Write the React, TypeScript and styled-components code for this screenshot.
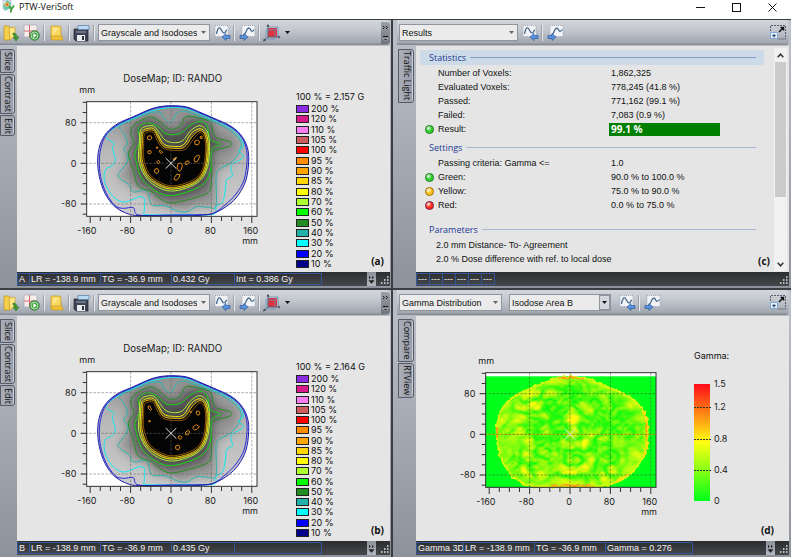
import React, { useId } from "react";
import styled, { createGlobalStyle } from "styled-components";

const uiFont = `"Liberation Sans", Arial, sans-serif`;
const headFont = `"Open Sans", "Noto Sans", sans-serif`;
const chartFont = `Inter, "DejaVu Sans", sans-serif`;

const GlobalStyle = createGlobalStyle`
  * { box-sizing: border-box; }
  body { margin: 0; background: #fff; font-family: ${uiFont}; font-size: 9px; color: #111; }
  button, select { font: inherit; color: inherit; }
`;

/* ---------- window ---------- */

const Window = styled.div`
  min-height: 100vh;
  display: flex;
  flex-direction: column;
`;

const TitleBar = styled.header`
  height: 19px;
  display: flex;
  align-items: flex-start;
  background: #fff;
  padding: 0 6px 0 2px;
`;

const AppTitle = styled.h1`
  flex: 1;
  margin: 0 0 0 4px;
  font: 400 9px/13px ${headFont};
`;

const WindowButton = styled.button`
  width: 36px;
  height: 13px;
  padding: 0;
  border: 0;
  background: none;
  display: flex;
  justify-content: center;
  align-items: center;
  &:last-child { width: 24px; margin-left: 6px; }
`;

const Workspace = styled.main`
  flex: 1;
  display: grid;
  grid-template-columns: minmax(0, 391fr) minmax(0, 398fr);
  grid-template-rows: minmax(268px, 268fr) minmax(267px, 267fr);
  gap: 2px;
  background: #3b3d41;
  padding-top: 1px;
`;

const Panel = styled.section<{ $side: "left" | "right" }>`
  display: flex;
  flex-direction: column;
  padding: ${(p) => (p.$side === "left" ? "0 1px 0 0" : "0 2px 0 4px")};
  background: linear-gradient(#bcc1ca, #8d929b);
`;

const Toolbar = styled.div`
  height: 25px;
  margin-bottom: 1px;
  display: flex;
  align-items: center;
  background: linear-gradient(#d3d6dc, #c3c7ce 40%, #a3a8b1 90%, #7d828b);
  border-radius: 0 4px 4px 0;
`;

const Body = styled.div`
  flex: 1;
  display: flex;
`;

const Rail = styled.nav<{ $side: "left" | "right" }>`
  width: ${(p) => (p.$side === "left" ? "17px" : "19px")};
  padding: 3px 2px 0 ${(p) => (p.$side === "left" ? "0" : "1px")};
  display: flex;
  flex-direction: column;
`;

const Tab = styled.button<{ $h: number }>`
  height: ${(p) => p.$h}px;
  margin-bottom: 1px;
  padding: 0 0 0 1px;
  border: 1px solid #565b66;
  border-radius: 0 3px 3px 0;
  background: linear-gradient(90deg, #a9aeb8, #989da7);
  box-shadow: inset -1px 0 #c8ccd4;
  writing-mode: vertical-rl;
  font: 400 9px/12px ${headFont};
  text-align: center;
  white-space: nowrap;
`;

const Column = styled.div`
  flex: 1;
  min-width: 0;
  display: flex;
  flex-direction: column;
  padding-bottom: 2px;
`;

const View = styled.div<{ $top?: number; $gap?: number }>`
  position: relative;
  flex: 1;
  display: flex;
  gap: ${(p) => p.$gap ?? 0}px;
  padding-top: ${(p) => p.$top ?? 0}px;
  background: #e5e5e5;
`;

const Caption = styled.span<{ $right?: number }>`
  position: absolute;
  right: ${(p) => p.$right ?? 6}px;
  bottom: 4px;
  font: 700 10px/14px ${headFont};
`;

/* ---------- toolbar parts ---------- */

const ToolButton = styled.button<{ $w?: number }>`
  width: ${(p) => p.$w ?? 22}px;
  height: 20px;
  padding: 0;
  border: 0;
  background: none;
  display: flex;
  align-items: center;
  justify-content: center;
`;

const Separator = styled.span`
  width: 1px;
  height: 16px;
  margin: 0 1px;
  background: #e8eaee;
  box-shadow: -1px 0 #9a9fa8;
`;

const Spacer = styled.span`
  flex: 1;
`;

const Picker = styled.label<{ $w: number; $boxed?: boolean }>`
  position: relative;
  width: ${(p) => p.$w}px;
  margin: 0 ${(p) => (p.$boxed ? "5px" : "1px")} 0 2px;
  display: flex;
  & + & { margin-left: 6px; }
`;

const Select = styled.select`
  width: 100%;
  height: 17px;
  padding: 0 12px 0 2px;
  appearance: none;
  border: 1px solid #8f949d;
  border-radius: 0;
  background: #ebebeb;
  font-size: 9px;
  line-height: 14px;
`;

const PickerArrow = styled.span<{ $boxed?: boolean }>`
  position: absolute;
  right: 1px;
  top: 1px;
  width: 11px;
  height: 15px;
  display: flex;
  align-items: center;
  justify-content: center;
  pointer-events: none;
  border: ${(p) => (p.$boxed ? "1px solid #8f949d" : "0")};
  background: ${(p) => (p.$boxed ? "#d3d6dc" : "none")};
  color: ${(p) => (p.$boxed ? "#111" : "#666")};
`;

const Overflow = styled.button`
  width: 9px;
  height: 22px;
  padding: 0;
  border: 0;
  border-radius: 0 3px 3px 0;
  background: linear-gradient(#9ba0a9, #6f747d);
  display: flex;
  align-items: center;
  justify-content: center;
`;

/* ---------- status bar ---------- */

const StatusBar = styled.footer`
  height: 14px;
  display: flex;
  background: linear-gradient(#2b2d30, #46484c);
  color: #f2f2f2;
  padding: 1px 1px 1px 0;
`;

const StatusCell = styled.span<{ $w: number }>`
  width: ${(p) => p.$w}px;
  border: 1px solid #34589c;
  margin-right: -1px;
  padding-left: 1px;
  line-height: 10px;
  white-space: nowrap;
`;

const StatusMenu = styled.button`
  width: 9px;
  margin: -1px 4px -1px 0;
  padding: 0;
  border: 0;
  background: linear-gradient(#8c9099, #b3b7bf);
  display: flex;
  align-items: center;
  justify-content: center;
`;

/* ---------- legends ---------- */

const Legend = styled.div`
  width: 70px;
  margin-left: 1px;
  padding: 22px 0 3px;
  display: flex;
  flex-direction: column;
  font: 400 9px/10px ${chartFont};
`;

const LegendTitle = styled.div`
  white-space: nowrap;
  margin-bottom: 2px;
`;

const LegendList = styled.ul`
  list-style: none;
  margin: 0;
  padding: 0;
  flex: 1;
  display: flex;
  flex-direction: column;
  justify-content: space-between;
`;

const LegendItem = styled.li`
  display: flex;
  align-items: center;
  gap: 2px;
  white-space: nowrap;
`;

const Swatch = styled.span<{ $c: string }>`
  width: 13px;
  height: 8px;
  border: 1px solid #222;
  background: ${(p) => p.$c};
`;

const GammaLegend = styled.div`
  padding-top: 9px;
  display: flex;
  flex-direction: column;
  gap: 17px;
  font: 400 9px/12px ${chartFont};
`;

/* ---------- results ---------- */

const Results = styled.div`
  flex: 1;
  min-width: 0;
  padding: 4px 10px 4px 4px;
`;

const SectionHead = styled.h2<{ $active?: boolean; $gap: number }>`
  height: 15px;
  margin: ${(p) => p.$gap}px 0 1px;
  padding: 0 8px 0 9px;
  display: flex;
  align-items: center;
  gap: 4px;
  background: ${(p) => (p.$active ? "#cddbe8" : "none")};
  color: #1c3a94;
  font: 400 9px/15px ${headFont};
  &::after {
    content: "";
    flex: 1;
    height: 1px;
    background: ${(p) => (p.$active ? "#7f9fc9" : "#a8b8d4")};
  }
`;

const Table = styled.table`
  width: 100%;
  border-collapse: collapse;
  table-layout: fixed;
  line-height: 14px;
`;

const LedCell = styled.td`
  width: 18px;
  height: 14px;
  padding: 0 0 0 5px;
  line-height: 0;
`;

const NameCell = styled.th`
  width: 171px;
  padding: 0;
  text-align: left;
  font-weight: 400;
`;

const ValueCell = styled.td`
  padding: 0;
`;

const Led = styled.span<{ $c: string; $edge: string }>`
  display: inline-block;
  width: 9px;
  height: 9px;
  border-radius: 50%;
  border: 1px solid ${(p) => p.$edge};
  background: radial-gradient(circle at 35% 30%, #fff, ${(p) => p.$c} 45%);
`;

const Value = styled.span`
  padding-left: 2px;
`;

const PassBar = styled.span`
  display: block;
  width: 111px;
  height: 13px;
  padding-left: 2px;
  background: #008000;
  color: #fff;
  font: 700 10px/13px "Noto Sans", sans-serif;
`;

const Scrollbar = styled.div`
  width: 13px;
  margin: 2px 2px 1px 0;
  display: flex;
  flex-direction: column;
  background: #f1f1f1;
`;

const ScrollButton = styled.button`
  height: 14px;
  padding: 0;
  border: 0;
  background: none;
  display: flex;
  align-items: center;
  justify-content: center;
`;

const ScrollTrack = styled.div`
  flex: 1;
`;

const ScrollThumb = styled.div`
  height: 69%;
  margin: 0 1px;
  background: #cbcbcb;
`;

/* ---------- icons ---------- */

const OpenIcon = () => (
  <svg width="18" height="18" viewBox="0 0 18 18">
    <path d="M2 2h5l1 1v13H2z" fill="#f4cf4c" stroke="#b98f22" strokeWidth=".7" />
    <path d="M7 4l6-1v9l-5 4z" fill="#ffe680" stroke="#c79f2e" strokeWidth=".7" />
    <path d="M11 9c3 0 4 2 4 4h2l-3 4-3-4h2c0-1-1-2-2-2z" fill="#3f9a36" stroke="#226b1e" strokeWidth=".5" />
  </svg>
);
const AxesPlayIcon = () => (
  <svg width="18" height="18" viewBox="0 0 18 18">
    <path d="M1 1h13v12H1z" fill="#f6ecec" stroke="#a9a9b2" strokeWidth=".7" />
    <path d="M6.500 1v12M1 7h13" stroke="#d56a6f" />
    <circle cx="11.500" cy="11.500" r="4.800" fill="#46a545" stroke="#1f6f28" strokeWidth=".7" />
    <circle cx="11.500" cy="11.500" r="3.500" fill="none" stroke="#d7f0d2" strokeWidth=".8" />
    <path d="M10.300 9.300v4.400l3.500-2.200z" fill="#fff" />
  </svg>
);
const FolderIcon = () => (
  <svg width="16" height="18" viewBox="0 0 16 18">
    <path d="M2 2h8l2 1v12H2z" fill="#f7d75e" stroke="#bf9324" strokeWidth=".7" />
    <path d="M2 12h11l1 4H3z" fill="#efc136" stroke="#bf9324" strokeWidth=".6" />
    <path d="M4 4l6 0-6 7z" fill="#fff0a6" opacity=".7" />
  </svg>
);
const SaveIcon = () => (
  <svg width="18" height="18" viewBox="0 0 18 18">
    <path d="M1 5h14v12H3l-2-2z" fill="#3c4453" stroke="#20242c" strokeWidth=".7" />
    <path d="M5 1.500h11v4H5z" fill="#bcd9f2" stroke="#5f86ad" strokeWidth=".8" />
    <path d="M4 11h8v6H4z" fill="#e9ecf0" />
    <path d="M9 12h2v4H9z" fill="#2c313a" />
    <path d="M3 7h10v2H3z" fill="#6a7485" />
  </svg>
);
const WaveIcon = ({ dir }: { dir: "left" | "right" }) => (
  <svg width="17" height="17" viewBox="0 0 17 17">
    <path d={dir === "left" ? "M1 1.500h13v11H1z" : "M3 1.500h13v11H3z"} fill="#f1f3f6" stroke="#a5abb5" strokeDasharray="1 1" />
    <path
      d={dir === "left" ? "M2.500 10c1-5 2-7 3.500-6S8 9 10 9s1-2 3-3" : "M4 11c2 0 2.500-2 3.500-4.500s3-3.500 4-1 2 2.500 4 0"}
      fill="none"
      stroke="#3c6188"
      strokeWidth="1.200"
    />
    {dir === "left" ? (
      <path d="M8 13l4-3.500v2h4v3h-4v2z" fill="#5a93dc" stroke="#1e4d96" strokeWidth=".6" />
    ) : (
      <path d="M9 13L5 9.500v2H1v3h4v2z" fill="#5a93dc" stroke="#1e4d96" strokeWidth=".6" />
    )}
  </svg>
);
const CubeIcon = () => (
  <svg width="18" height="18" viewBox="0 0 18 18">
    <path d="M5 4h9v9H5z" fill="#dd3340" />
    <path d="M5 1v12h11M5 13l-4 4" fill="none" stroke="#55606e" />
    <path d="M3 6h9v9H3zM3 6l3-3h9v9l-3 3M12 6l3-3" fill="none" stroke="#6f93b8" strokeWidth=".8" />
    <path d="M0 17.500l1-3 2 2zM17.500 13l-2-1.500v3zM5 0L3.500 2.500h3z" fill="#3c4653" />
  </svg>
);
const Arrow = () => (
  <svg width="5" height="3" viewBox="0 0 5 3">
    <path d="M0 0h5L2.500 3z" fill="currentColor" />
  </svg>
);
const ExpandIcon = () => (
  <svg width="17" height="15" viewBox="0 0 17 15">
    <path d="M1 .500h14.500v13.500H8" fill="none" stroke="#5a606b" strokeDasharray="2 1" />
    <path d="M.500 1v6" stroke="#5a606b" strokeDasharray="2 1" />
    <path d="M.500 7.500h7v6h-7z" fill="#eaf2fb" stroke="#7ea6d6" />
    <path d="M4 9v3.500M2.200 10.700h3.600" stroke="#1f3b66" />
    <path d="M9 7l4-4M10.500 2.500h3v3" fill="none" stroke="#111" strokeWidth="1.500" />
  </svg>
);
const OverflowIcon = () => (
  <svg width="7" height="18" viewBox="0 0 7 18">
    <path d="M1 2l1.500 1.500L1 5M4 2l1.500 1.500L4 5" fill="none" stroke="#1c1c1c" />
    <path d="M1 12.500h5" stroke="#1c1c1c" />
    <path d="M1 14.500h5L3.500 17z" fill="#1c1c1c" stroke="#f5f5f5" strokeWidth=".5" />
  </svg>
);
const MenuIcon = () => (
  <svg width="7" height="9" viewBox="0 0 7 9">
    <path d="M1 1l1.500 1.500L1 4M4 1l1.500 1.500L4 4M1 5.500h5L3.500 8.500z" fill="#222" stroke="#222" strokeWidth=".5" />
  </svg>
);
const Grip = () => (
  <svg width="9" height="12" viewBox="0 0 9 12">
    <path
      d="M7 4h1.500M7 7h1.500M4 7h1.500M7 10h1.500M4 10h1.500M1 10h1.500"
      stroke="#e6e6e6"
      strokeWidth="1.500"
    />
  </svg>
);
const Chevron = ({ up }: { up?: boolean }) => (
  <svg width="7" height="5" viewBox="0 0 7 5">
    <path d={up ? "M.700 4.300L3.500 1.200l2.800 3.100" : "M.700.700l2.800 3.100L6.300.700"} fill="none" stroke="#333" strokeWidth="1.500" />
  </svg>
);
const AppIcon = () => (
  <svg width="13" height="13" viewBox="0 0 13 13">
    <path d="M1 0h8v9H1z" fill="#dfe6ee" stroke="#a3aebb" strokeWidth=".6" />
    <path d="M1 6l4-6 4 3-1 5-5 3z" fill="#68c7b2" />
    <circle cx="5" cy="4.500" r="2.300" fill="#f2b54a" />
    <circle cx="5.200" cy="4.500" r="1" fill="#d5453a" />
    <path d="M7 6l2.500 3L12 5.500M9.500 9l-1 3.500" fill="none" stroke="#3d9e35" strokeWidth="1.800" />
  </svg>
);

/* ---------- charts (three drawing units per pixel) ---------- */

type Pt = [number, number];

function smooth(pts: Pt[]) {
  const n = pts.length;
  let d = `M${pts[0][0]} ${pts[0][1]}`;
  for (let i = 0; i < n; i++) {
    const a = pts[(i - 1 + n) % n];
    const b = pts[i];
    const c = pts[(i + 1) % n];
    const e = pts[(i + 2) % n];
    d += `C${b[0] + (c[0] - a[0]) / 6} ${b[1] + (c[1] - a[1]) / 6} ${c[0] - (e[0] - b[0]) / 6} ${c[1] - (e[1] - b[1]) / 6} ${c[0]} ${c[1]}`;
  }
  return d + "Z";
}

const body = smooth([[515, 47], [560, 51], [600, 67], [640, 84], [690, 107], [722, 134], [742, 172], [746, 215], [738, 270], [715, 315], [685, 345], [645, 368], [600, 376], [510, 377], [430, 377], [388, 373], [345, 350], [315, 310], [298, 260], [293, 210], [300, 165], [320, 128], [355, 100], [400, 80], [450, 58], [480, 50]]);
const body20 = smooth([[515, 49], [560, 53], [600, 69], [640, 86], [690, 110], [722, 138], [738, 172], [741, 215], [732, 270], [708, 312], [675, 345], [640, 370], [600, 374], [510, 375], [416, 375], [400, 353], [370, 355], [345, 347], [318, 308], [302, 260], [298, 210], [305, 165], [322, 130], [357, 102], [402, 81], [450, 60], [480, 52]]);
const iso30 = smooth([[515, 52], [560, 57], [600, 73], [640, 90], [690, 114], [718, 140], [731, 168], [716, 182], [730, 202], [694, 226], [697, 258], [680, 268], [676, 300], [668, 335], [648, 350], [640, 373], [550, 374], [440, 374], [433, 362], [434, 330], [420, 320], [375, 336], [345, 325], [322, 295], [312, 262], [318, 237], [335, 228], [346, 208], [337, 175], [342, 160], [318, 138], [357, 105], [402, 84], [450, 64]]);
const iso40 = smooth([[480, 66], [490, 82], [505, 97], [518, 92], [530, 70], [556, 64], [600, 80], [640, 94], [690, 122], [722, 155], [716, 190], [690, 220], [655, 240], [648, 265], [648, 348], [625, 352], [590, 350], [560, 366], [530, 362], [495, 347], [455, 344], [440, 302], [400, 306], [388, 285], [356, 262], [360, 245], [378, 222], [384, 198], [371, 178], [382, 160], [372, 130], [358, 112], [380, 97], [440, 72]]);
const iso50 = smooth([[430, 88], [455, 81], [480, 95], [510, 118], [540, 108], [558, 80], [600, 85], [632, 98], [645, 140], [690, 155], [690, 168], [655, 178], [635, 190], [635, 240], [630, 300], [600, 318], [560, 330], [510, 339], [475, 322], [455, 305], [415, 288], [400, 240], [385, 190], [402, 160], [392, 130], [402, 105]]);
const iso60 = smooth([[430, 101], [450, 99], [475, 110], [495, 130], [520, 134], [545, 128], [570, 106], [600, 94], [622, 108], [630, 148], [662, 163], [636, 178], [632, 240], [612, 280], [570, 303], [510, 317], [465, 302], [425, 265], [410, 220], [405, 190], [420, 150], [414, 118]]);
const iso70 = smooth([[432, 111], [460, 108], [478, 128], [495, 150], [520, 158], [548, 152], [572, 122], [600, 107], [622, 126], [629, 170], [623, 230], [602, 270], [560, 294], [510, 303], [465, 287], [433, 255], [416, 210], [418, 160], [420, 125]]);
const iso80 = smooth([[434, 118], [460, 115], [476, 138], [492, 163], [520, 169], [550, 165], [574, 130], [600, 116], [618, 131], [625, 170], [619, 230], [598, 268], [560, 289], [510, 297], [467, 281], [437, 253], [421, 208], [422, 160], [424, 130]]);
const iso90 = smooth([[436, 123], [460, 121], [474, 144], [490, 169], [520, 175], [553, 172], [578, 138], [600, 122], [615, 135], [621, 172], [615, 229], [595, 265], [557, 285], [510, 292], [470, 277], [441, 250], [426, 206], [427, 160], [428, 134]]);
const iso95 = smooth([[439, 128], [459, 127], [471, 150], [488, 174], [520, 181], [556, 178], [581, 146], [600, 128], [612, 140], [617, 174], [611, 227], [592, 261], [553, 281], [510, 287], [473, 273], [445, 247], [431, 204], [431, 160], [432, 138]]);

const islandsA =
  "M443 139l9-2 4 7-6 6-8-3zM444 183l8-1 2 6-7 4-4-4zM470 216l6-5 4 6-5 5zM464 238l8-3 5 8-6 8-7-4zM584 153l9-3 6 6-5 9-9-2zM586 200l10-5 3 5-7 15-7 1-3-7zM556 216l9-4 3 5-7 7-6-2zM534 221l8-2 5 8-3 12-7 5-6-10zM524 262l6-9 10 1-4 11-8 6-6-3zM478 182l4-1 6 6-3 3-5-2zM520 206l9-4 0 3-7 6zM600 140l5-2 2 7-5 1zM469 171l4 0 1 3-4 1z";
const islandsB =
  "M444 139l5-1 6 10-4 3-6-6zM446 182l4-1 1 4-4 1zM589 154l7-1 4 6-4 7-7-4zM580 200l9-6 9 6-6 7-8 3-5-4zM557 216l9-5 3 5-6 9-7-2zM535 229l7-2 4 5-4 6-7-3zM527 258l8-3 5 6-5 9-8-4zM571 154l3 0 0 3-3 0z";

const ChartSvg = styled.svg`
  flex: none;
  display: block;
  font-family: ${chartFont};
  fill: #1a1a1a;
`;

const xTicks = [-160, -80, 0, 80, 160];
const yTicks = [80, 0, -80];
const X = (v: number) => 513 + v * 1.515;
const Y = (v: number) => 220 - v * 1.525;

function Chart({ title, children, dark }: { title?: string; children: React.ReactNode; dark?: boolean }) {
  const grid = dark ? "#3d5a2c" : "#666";
  return (
    <ChartSvg width="253" height="185" viewBox="51 -60 759 555" role="img" aria-label={title ?? "Gamma distribution"}>
      {title && <text x="518" y="-25" fontSize="29" textAnchor="middle">{title}</text>}
      <text x="238" y="10" fontSize="27">mm</text>
      <rect x="260" y="35" width="511" height="344" fill="#fff" />
      {children}
      <g stroke={grid} strokeWidth="2" strokeDasharray="8 4" opacity=".8">
        {xTicks.slice(1).map((v) => <path key={v} d={`M${X(v)} 35V379`} />)}
        {yTicks.map((v) => <path key={v} d={`M244 ${Y(v)}H771`} />)}
      </g>
      <path d="M497 204l32 32M529 204l-32 32" stroke="#e8e8e8" strokeWidth="3" />
      <rect x="260" y="35" width="511" height="344" fill="none" stroke="#333" strokeWidth="3" />
      <g stroke="#333" strokeWidth="3">
        {Array.from({ length: 17 }, (_, i) => i * 20 - 160).map((v) => (
          <path key={v} d={`M${X(v)} 381v${v % 80 ? 12 : 18}`} />
        ))}
        {Array.from({ length: 12 }, (_, i) => i * 20 - 100).map((v) => (
          <path key={v} d={`M260 ${Y(v)}h${v % 80 ? -12 : -18}`} />
        ))}
      </g>
      <g fontSize="27" textAnchor="middle">
        {xTicks.map((v) => <text key={v} x={X(v) - (v < 0 ? 10 : 3)} y="432">{v}</text>)}
      </g>
      <g fontSize="27" textAnchor="end">
        {yTicks.map((v) => <text key={v} x="229" y={Y(v) + 10}>{v}</text>)}
      </g>
      <text x="774" y="461" fontSize="27" textAnchor="end">mm</text>
    </ChartSvg>
  );
}

function DosePlot({ islands }: { islands: string }) {
  const id = useId().replace(/[^a-zA-Z0-9]/g, "");
  return (
    <>
      <defs>
        <clipPath id={`c${id}`}><path d={body} /></clipPath>
        <filter id={`b${id}`} x="-20%" y="-20%" width="140%" height="140%" colorInterpolationFilters="sRGB">
          <feGaussianBlur stdDeviation="14" />
        </filter>
        <linearGradient id={`g${id}`} x1="0" y1="0" x2="0" y2="1">
          <stop offset="0" stopColor="#8f8f8f" />
          <stop offset=".4" stopColor="#b8b8b8" />
          <stop offset="1" stopColor="#cbcbcb" />
        </linearGradient>
      </defs>
      <g clipPath={`url(#c${id})`}>
        <path d={body} fill={`url(#g${id})`} />
        <g filter={`url(#b${id})`}>
          <path d={iso40} fill="#949494" />
          <path d={iso50} fill="#707070" />
          <path d={iso60} fill="#4c4c4c" stroke="#4c4c4c" strokeWidth="6" />
        </g>
      </g>
      <path d={iso90} fill="#050505" />
      <g fill="none" strokeWidth="3">
        <path d={iso40} stroke="#2bb5ad" />
        <path d={iso30} stroke="#12e8ee" />
        <path d={iso50} stroke="#229022" />
        <path d={iso60} stroke="#12d812" />
        <path d={iso70} stroke="#b4f03a" />
        <path d={iso80} stroke="#f5ea00" />
        <path d={iso90} stroke="#e8b800" />
        <path d={iso95} stroke="#c87a10" strokeWidth="2" />
        <path d={islands} stroke="#e08a10" />
        <path d={body20} stroke="#2a2ae0" />
        <path d={body} stroke="#1a1aa8" />
      </g>
    </>
  );
}

function GammaPlot() {
  return (
    <>
      <defs>
        <clipPath id="gammaBody"><path d={body} /></clipPath>
        <filter id="gammaNoise" x="0" y="0" width="100%" height="100%" colorInterpolationFilters="sRGB">
          <feTurbulence type="turbulence" baseFrequency="0.022 0.026" numOctaves="2" seed="11" />
          <feColorMatrix values="1.5 0 0 0 0.04  0 0 0 0 0.98  0 0 0 0 0.05  0 0 0 0 1" />
        </filter>
        <filter id="gammaRough" x="-5%" y="-5%" width="110%" height="110%" colorInterpolationFilters="sRGB">
          <feTurbulence type="fractalNoise" baseFrequency="0.09" numOctaves="2" seed="4" result="n" />
          <feDisplacementMap in="SourceGraphic" in2="n" scale="12" xChannelSelector="R" yChannelSelector="G" />
        </filter>
        <filter id="gammaSoft" x="-30%" y="-30%" width="160%" height="160%" colorInterpolationFilters="sRGB">
          <feGaussianBlur stdDeviation="11" />
        </filter>
      </defs>
      <rect x="260" y="46" width="511" height="333" fill="#00ff1a" />
      <g clipPath="url(#gammaBody)">
        <rect x="285" y="40" width="470" height="340" filter="url(#gammaNoise)" />
        <g filter="url(#gammaSoft)" opacity=".6">
          <path d={body} fill="none" stroke="#c0ff10" strokeWidth="34" />
          <path d="M300 150l60 0 20 40-50 10zM300 225l70-15 30 30-80 50zM390 370l50-60 30 10-50 55zM650 330l60-90 30 10-30 80zM640 230l90 25-10 15-80-25z" fill="#b8ff10" />
        </g>
      </g>
      <g fill="none" filter="url(#gammaRough)">
        <path d={body} stroke="#d8f810" strokeWidth="6" />
        <path d="M735 150l9 40 0 60-8 40M690 340l-50 28" stroke="#ffe010" strokeWidth="8" />
        <path d="M480 52l35-3 40 4M742 180v60M455 374h130M294 200v30" stroke="#ff9a18" strokeWidth="5" />
      </g>
      <path d="M260 220H771" stroke="#c8d800" strokeWidth="3" />
    </>
  );
}

function GammaScale() {
  const marks: [string, number][] = [["1.5", 0], ["1.2", 23], ["0.8", 55], ["0.4", 86], ["0", 117]];
  return (
    <ChartSvg width="50" height="126" viewBox="0 -5 50 126" role="img" aria-label="Gamma colour scale">
      <defs>
        <linearGradient id="scale" x1="0" y1="0" x2="0" y2="1">
          <stop offset="0" stopColor="#ff0a1a" />
          <stop offset=".5" stopColor="#ffff10" />
          <stop offset="1" stopColor="#00ff1a" />
        </linearGradient>
      </defs>
      <rect width="16" height="117" fill="url(#scale)" />
      {marks.map(([label, y]) => (
        <g key={label}>
          {y > 0 && y < 117 && <path d={`M0 ${y + 0.5}h18`} stroke="#333" strokeDasharray="2 1" />}
          <text x="20" y={y + 3} fontSize="9">{label}</text>
        </g>
      ))}
    </ChartSvg>
  );
}

/* ---------- panels ---------- */

const levels: [number, string][] = [
  [200, "#8a2be2"], [120, "#d81b8c"], [110, "#f57ef0"], [105, "#cd5c5c"], [100, "#ff0000"], [95, "#ff8c00"],
  [90, "#ffa500"], [85, "#ffd700"], [80, "#ffff00"], [70, "#adff2f"], [60, "#00ff00"], [50, "#228b22"],
  [40, "#20b2aa"], [30, "#00ffff"], [20, "#0000ff"], [10, "#00008b"],
];

function Dropdown({ label, value, width, boxed }: { label: string; value: string; width: number; boxed?: boolean }) {
  return (
    <Picker $w={width} $boxed={boxed}>
      <Select aria-label={label} defaultValue={value}>
        <option>{value}</option>
      </Select>
      <PickerArrow $boxed={boxed}><Arrow /></PickerArrow>
    </Picker>
  );
}

function WaveButtons() {
  return (
    <>
      <ToolButton aria-label="Import profile"><WaveIcon dir="left" /></ToolButton>
      <Separator />
      <ToolButton aria-label="Export profile"><WaveIcon dir="right" /></ToolButton>
    </>
  );
}

function Status({ cells, menu = true }: { cells: [string, number][]; menu?: boolean }) {
  return (
    <StatusBar>
      {cells.map(([text, w], i) => <StatusCell key={i} $w={w}>{text}</StatusCell>)}
      <Spacer />
      {menu && <StatusMenu aria-label="Status options"><MenuIcon /></StatusMenu>}
      <Grip />
    </StatusBar>
  );
}

type DosePanelProps = { name: string; dose: string; max: string; integral: string; caption: string; islands: string };

function DosePanel({ name, dose, max, integral, caption, islands }: DosePanelProps) {
  return (
    <Panel $side="left">
      <Toolbar>
        <ToolButton aria-label="Open" $w={21}><OpenIcon /></ToolButton>
        <ToolButton aria-label="Run"><AxesPlayIcon /></ToolButton>
        <Separator />
        <ToolButton aria-label="Folder"><FolderIcon /></ToolButton>
        <Separator />
        <ToolButton aria-label="Save"><SaveIcon /></ToolButton>
        <Separator />
        <Dropdown label="Display mode" value="Grayscale and Isodoses" width={112} />
        <WaveButtons />
        <Separator />
        <ToolButton aria-label="3D view"><CubeIcon /></ToolButton>
        <ToolButton aria-label="3D view options" $w={8}><Arrow /></ToolButton>
        <Spacer />
        <Overflow aria-label="More tools"><OverflowIcon /></Overflow>
      </Toolbar>
      <Body>
        <Rail $side="left">
          <Tab $h={24}>Slice</Tab>
          <Tab $h={40}>Contrast</Tab>
          <Tab $h={21}>Edit</Tab>
        </Rail>
        <Column>
          <View $top={24} $gap={25}>
            <Chart title="DoseMap; ID: RANDO"><DosePlot islands={islands} /></Chart>
            <Legend>
              <LegendTitle>100 % = {max} G</LegendTitle>
              <LegendList>
                {levels.map(([v, c]) => <LegendItem key={v}><Swatch $c={c} />{v} %</LegendItem>)}
              </LegendList>
            </Legend>
            <Caption>{caption}</Caption>
          </View>
          <Status cells={[[name, 13], ["LR = -138.9 mm", 72], ["TG = -36.9 mm", 72], [dose, 64], [integral, 88]]} />
        </Column>
      </Body>
    </Panel>
  );
}

type Row = { name: string; value: React.ReactNode; led?: "green" | "yellow" | "red" };
const ledColors = {
  green: ["#2fd22f", "#1d7a1d"],
  yellow: ["#ffc21a", "#9a6c10"],
  red: ["#ff2a1a", "#7c1c4c"],
};

function Rows({ rows }: { rows: Row[] }) {
  return (
    <Table>
      <tbody>
        {rows.map((r) => (
          <tr key={r.name}>
            <LedCell>{r.led && <Led $c={ledColors[r.led][0]} $edge={ledColors[r.led][1]} />}</LedCell>
            <NameCell scope="row">{r.name}</NameCell>
            <ValueCell>{typeof r.value === "string" ? <Value>{r.value}</Value> : r.value}</ValueCell>
          </tr>
        ))}
      </tbody>
    </Table>
  );
}

const ParameterList = styled.ul`
  list-style: none;
  margin: 0;
  padding: 0 0 0 16px;
  line-height: 14px;
`;

function ResultsPanel() {
  return (
    <Panel $side="right">
      <Toolbar>
        <Dropdown label="View" value="Results" width={119} />
        <WaveButtons />
        <Spacer />
        <ToolButton aria-label="Expand"><ExpandIcon /></ToolButton>
      </Toolbar>
      <Body>
        <Rail $side="right"><Tab $h={54}>Traffic Light</Tab></Rail>
        <Column>
          <View>
            <Results>
              <SectionHead $active $gap={0}>Statistics</SectionHead>
              <Rows
                rows={[
                  { name: "Number of Voxels:", value: "1,862,325" },
                  { name: "Evaluated Voxels:", value: "778,245 (41.8 %)" },
                  { name: "Passed:", value: "771,162 (99.1 %)" },
                  { name: "Failed:", value: "7,083 (0.9 %)" },
                  { name: "Result:", value: <PassBar>99.1 %</PassBar>, led: "green" },
                ]}
              />
              <SectionHead $gap={4}>Settings</SectionHead>
              <Rows
                rows={[
                  { name: "Passing criteria: Gamma <=", value: "1.0" },
                  { name: "Green:", value: "90.0 % to 100.0 %", led: "green" },
                  { name: "Yellow:", value: "75.0 % to 90.0 %", led: "yellow" },
                  { name: "Red:", value: "0.0 % to 75.0 %", led: "red" },
                ]}
              />
              <SectionHead $gap={10}>Parameters</SectionHead>
              <ParameterList>
                <li>2.0 mm Distance- To- Agreement</li>
                <li>2.0 % Dose difference with ref. to local dose</li>
              </ParameterList>
            </Results>
            <Scrollbar>
              <ScrollButton aria-label="Scroll up"><Chevron up /></ScrollButton>
              <ScrollTrack><ScrollThumb /></ScrollTrack>
              <ScrollButton aria-label="Scroll down"><Chevron /></ScrollButton>
            </Scrollbar>
            <Caption $right={19}>(c)</Caption>
          </View>
          <Status menu={false} cells={Array.from({ length: 6 }, () => ["---", 14] as [string, number])} />
        </Column>
      </Body>
    </Panel>
  );
}

function GammaPanel() {
  return (
    <Panel $side="right">
      <Toolbar>
        <Dropdown label="View" value="Gamma Distribution" width={103} />
        <Dropdown label="Area" value="Isodose Area B" width={102} boxed />
        <WaveButtons />
        <Spacer />
        <ToolButton aria-label="Expand"><ExpandIcon /></ToolButton>
      </Toolbar>
      <Body>
        <Rail $side="right">
          <Tab $h={43}>Compare</Tab>
          <Tab $h={35}>RTView</Tab>
        </Rail>
        <Column>
          <View $top={25} $gap={25}>
            <Chart dark><GammaPlot /></Chart>
            <GammaLegend>
              <span>Gamma:</span>
              <GammaScale />
            </GammaLegend>
            <Caption $right={15}>(d)</Caption>
          </View>
          <Status cells={[["Gamma 3D", 48], ["LR = -138.9 mm", 72], ["TG = -36.9 mm", 72], ["Gamma = 0.276", 88]]} />
        </Column>
      </Body>
    </Panel>
  );
}

export default function App() {
  return (
    <Window>
      <GlobalStyle />
      <TitleBar>
        <AppIcon />
        <AppTitle>PTW-VeriSoft</AppTitle>
        <WindowButton aria-label="Minimize">
          <svg width="10" height="10"><path d="M0 5.500h9" stroke="#111" /></svg>
        </WindowButton>
        <WindowButton aria-label="Maximize">
          <svg width="10" height="10"><rect x=".500" y="1.500" width="8" height="8" fill="none" stroke="#111" /></svg>
        </WindowButton>
        <WindowButton aria-label="Close">
          <svg width="10" height="10"><path d="M.500 1.500l8 8M8.500 1.500l-8 8" stroke="#111" /></svg>
        </WindowButton>
      </TitleBar>
      <Workspace>
        <DosePanel name="A" dose="0.432 Gy" max="2.157" integral="Int = 0.386 Gy" caption="(a)" islands={islandsA} />
        <ResultsPanel />
        <DosePanel name="B" dose="0.435 Gy" max="2.164" integral="" caption="(b)" islands={islandsB} />
        <GammaPanel />
      </Workspace>
    </Window>
  );
}
